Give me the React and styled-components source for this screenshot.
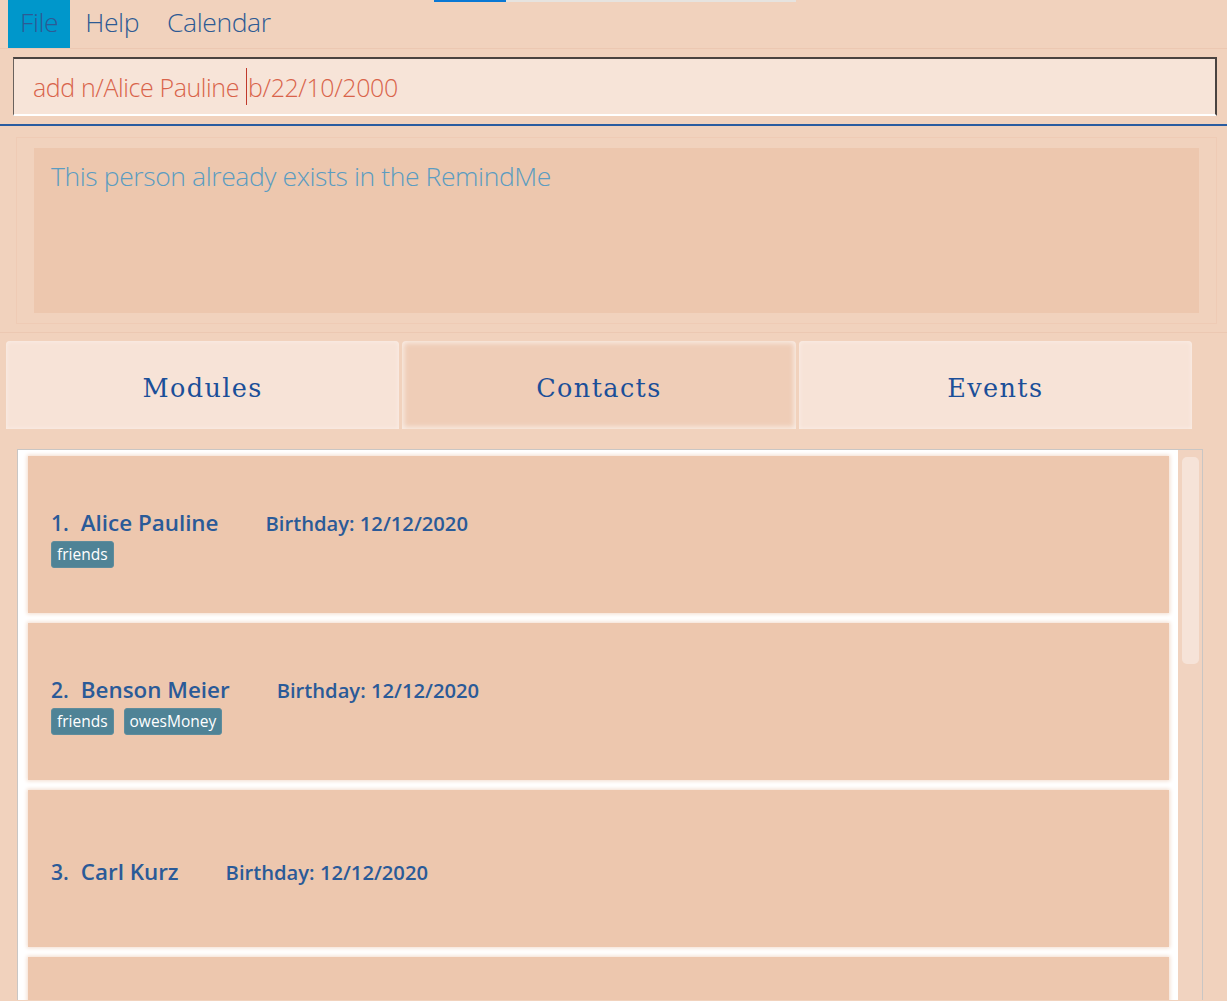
import React from 'react';
import styled, { createGlobalStyle } from 'styled-components';

const GlobalStyle = createGlobalStyle`
  html, body {
    margin: 0;
    padding: 0;
    background: #f1d2bd;
    overflow: hidden;
  }
  * {
    box-sizing: border-box;
  }
`;

const Window = styled.div`
  position: relative;
  width: 1227px;
  height: 1001px;
  overflow: hidden;
  background: #f1d2bd;
  font-family: 'Open Sans', 'Noto Sans', sans-serif;
`;

const Progress = styled.div`
  position: absolute;
  top: 0;
  left: 434px;
  width: 362px;
  height: 2px;
  background: linear-gradient(to right, #0a78d4 0 72px, #e6e3df 72px);
`;

const MenuBar = styled.div`
  display: flex;
  height: 49px;
  padding-left: 8px;
  border-bottom: 1px solid #ecc8b2;
`;

const MenuItem = styled.div`
  display: flex;
  align-items: center;
  height: 48px;
  padding: 0 ${(p) => (p.$active ? '12px' : '14px')} 5px;
  margin-right: ${(p) => (p.$active ? '1px' : '0')};
  background: ${(p) => (p.$active ? '#0097cb' : 'transparent')};
  color: #2d5a94;
  font-weight: 300;
  font-size: 26.5px;
  letter-spacing: -0.4px;
`;

const CommandArea = styled.div`
  padding: 8px 10px 8px 13px;
  border-bottom: 2px solid #2a5ca0;
`;

const CommandBox = styled.div`
  display: flex;
  align-items: center;
  height: 59px;
  padding-left: 19px;
  background: #f7e4d8;
  border-top: 2px solid #4a4340;
  border-left: 1px solid #6a625d;
  border-right: 2px solid #4a4340;
  border-bottom: 2px solid #ffffff;
  color: #d9634a;
  font-weight: 300;
  font-size: 25px;
  letter-spacing: -0.4px;
`;

const Caret = styled.span`
  display: inline-block;
  width: 1px;
  height: 37px;
  margin: 0 1px 0 7px;
  background: #c0392b;
  vertical-align: middle;
`;

const ResultArea = styled.div`
  padding: 11px 10px 8px 16px;
  border-bottom: 1px solid #ecc8b2;
`;

const ResultFrame = styled.div`
  padding: 10px 17px 10px 17px;
  border: 1px solid #efcbb5;
`;

const ResultBox = styled.div`
  height: 165px;
  padding: 10px 17px;
  background: #edc7ae;
  color: #5b9cc1;
  font-weight: 300;
  font-size: 26.5px;
  letter-spacing: -0.4px;
`;

const TabRow = styled.div`
  display: flex;
  gap: 3px;
  padding: 8px 35px 0 6px;
`;

const Tab = styled.div`
  flex: 1;
  display: flex;
  align-items: center;
  justify-content: center;
  height: 88px;
  padding-top: 5px;
  border-radius: 4px 4px 0 0;
  background: ${(p) => (p.$active ? '#efcdb7' : '#f7e3d7')};
  box-shadow: ${(p) =>
    p.$active ? 'inset 0 0 5px 2px #f9ece4' : 'inset 0 0 4px #fbf0ea'};
  color: #1b4f99;
  font-family: 'DejaVu Serif', 'Liberation Serif', serif;
  font-size: 25.5px;
  letter-spacing: 1.4px;
`;

const ListPanel = styled.div`
  display: flex;
  margin: 20px 24px 0 17px;
  height: 551px;
  overflow: hidden;
  background: #ffffff;
  border: 1px solid #c9c6c4;
  border-bottom: none;
`;

const CardList = styled.div`
  flex: 1;
  display: flex;
  flex-direction: column;
  gap: 10px;
  padding: 6px 9px 0 10px;
`;

const Card = styled.div`
  display: flex;
  flex-direction: column;
  justify-content: center;
  flex-shrink: 0;
  height: 157px;
  padding: 5px 23px 0;
  background: #edc7ae;
  box-shadow: 0 0 4px 1px #f3dccd;
`;

const NameRow = styled.div`
  display: flex;
  align-items: baseline;
  color: #2a5a98;
  font-family: 'Open Sans', 'Noto Sans', sans-serif;
  font-weight: 600;
`;

const Index = styled.span`
  font-size: 21px;
  margin-right: 12px;
`;

const Name = styled.span`
  font-size: 22.4px;
  margin-right: 47px;
`;

const Birthday = styled.span`
  font-size: 20.2px;
`;

const Tags = styled.div`
  display: flex;
  gap: 10px;
  margin-top: 3px;
`;

const Tag = styled.span`
  padding: 0 5px;
  border-radius: 3px;
  background: #4f8396;
  border: 1px solid #5e8c9c;
  color: #ffffff;
  font-family: 'Open Sans', 'Noto Sans', sans-serif;
  font-size: 15.5px;
  line-height: 25px;
`;

const ScrollTrack = styled.div`
  width: 24px;
  padding: 7px 3px 0 4px;
  background: #f1d3c0;
`;

const ScrollThumb = styled.div`
  height: 207px;
  border-radius: 5px;
  background: #f6e3d8;
`;

const contacts = [
  { name: 'Alice Pauline', birthday: '12/12/2020', tags: ['friends'] },
  { name: 'Benson Meier', birthday: '12/12/2020', tags: ['friends', 'owesMoney'] },
  { name: 'Carl Kurz', birthday: '12/12/2020', tags: [] },
];

function ContactCard({ index, person }) {
  return (
    <Card>
      <NameRow>
        <Index>{index}.</Index>
        <Name>{person.name}</Name>
        <Birthday>Birthday: {person.birthday}</Birthday>
      </NameRow>
      {person.tags.length > 0 && (
        <Tags>
          {person.tags.map((t) => (
            <Tag key={t}>{t}</Tag>
          ))}
        </Tags>
      )}
    </Card>
  );
}

export default function App() {
  return (
    <Window>
      <GlobalStyle />
      <Progress />
      <MenuBar>
        <MenuItem $active>File</MenuItem>
        <MenuItem>Help</MenuItem>
        <MenuItem>Calendar</MenuItem>
      </MenuBar>
      <CommandArea>
        <CommandBox>
          add n/Alice Pauline<Caret />b/22/10/2000
        </CommandBox>
      </CommandArea>
      <ResultArea>
        <ResultFrame>
          <ResultBox>This person already exists in the RemindMe</ResultBox>
        </ResultFrame>
      </ResultArea>
      <TabRow>
        <Tab>Modules</Tab>
        <Tab $active>Contacts</Tab>
        <Tab>Events</Tab>
      </TabRow>
      <ListPanel>
        <CardList>
          {contacts.map((p, i) => (
            <ContactCard key={p.name} index={i + 1} person={p} />
          ))}
          {/* next card is scrolled below the visible area */}
          <Card />
        </CardList>
        <ScrollTrack>
          <ScrollThumb />
        </ScrollTrack>
      </ListPanel>
    </Window>
  );
}
